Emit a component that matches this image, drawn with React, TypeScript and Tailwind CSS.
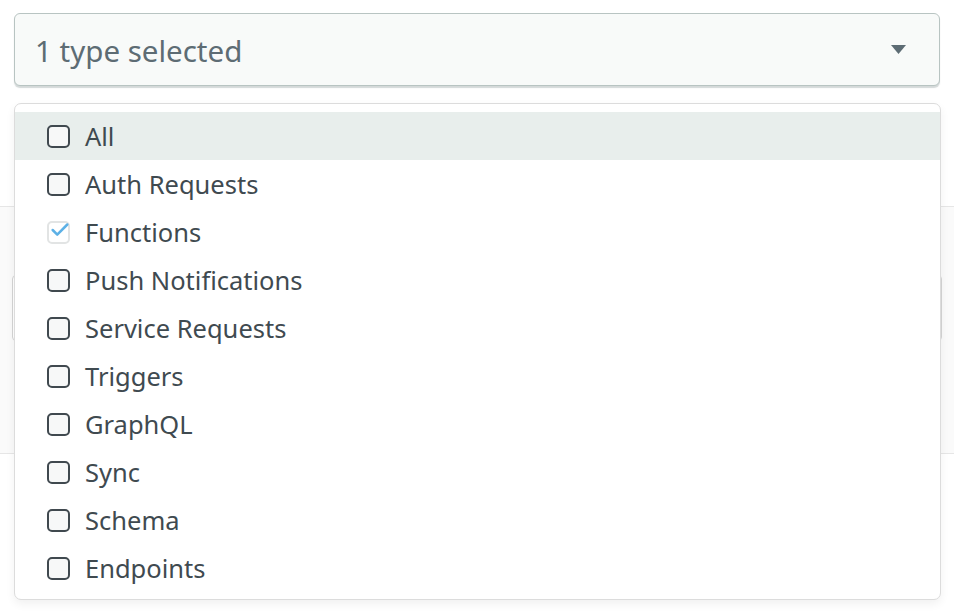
import { Check } from "lucide-react";

const TYPES = [
  "All",
  "Auth Requests",
  "Functions",
  "Push Notifications",
  "Service Requests",
  "Triggers",
  "GraphQL",
  "Sync",
  "Schema",
  "Endpoints",
];

const SELECTED = ["Functions"];

export default function App() {
  return (
    <div className="relative h-[614px] w-[954px] overflow-hidden bg-white font-['Noto_Sans',_'Open_Sans',_sans-serif]">
      {/* select */}
      <div className="px-[14px] pt-[13px]">
        <div className="flex h-[73px] items-center justify-between rounded-[6px] border border-[#b8c4c2] bg-[#f8faf9] pl-[20px] pr-[33px] shadow-[0_2px_1px_rgba(160,170,170,0.45)]">
          <span className="mt-[3px] text-[29.5px] leading-none text-[#5d6c74]">1 type selected</span>
          <svg width="15" height="10" viewBox="0 0 15 10">
            <path d="M0 0h15l-7.5 9z" fill="#5d6c74" />
          </svg>
        </div>
      </div>

      {/* content behind the menu */}
      <div className="mt-[120px] h-[248px] border-y border-[#e6e6e6] bg-[#fafafa] px-[12px] pt-[68px]">
        <div className="h-[66px] rounded-[4px] border border-[#d4d4d4] bg-white" />
      </div>

      {/* menu */}
      <div className="absolute left-[14px] top-[103px] w-[927px] rounded-[7px] border border-[#dcdcdc] bg-white pb-[7px] pt-[8px] shadow-[0_4px_10px_rgba(0,0,0,0.06)]">
        {TYPES.map((t, i) => {
          const checked = SELECTED.includes(t);
          return (
            <div key={t} className={`flex h-[48px] items-center gap-[15px] pl-[32px] ${i === 0 ? "bg-[#e8eeec]" : ""}`}>
              {checked ? (
                <span className="relative h-[23px] w-[23px] rounded-[5px] border-2 border-[#e2e4e4] bg-white">
                  <Check size={22} strokeWidth={2.75} className="absolute -top-[4px] left-[0px] text-[#5db1e6]" />
                </span>
              ) : (
                <span className="h-[23px] w-[23px] rounded-[5px] border-[2.5px] border-[#40494f] bg-[#f7f8f8]" />
              )}
              <span className="mt-[2px] text-[25.5px] leading-none text-[#3f4a50]">{t}</span>
            </div>
          );
        })}
      </div>
    </div>
  );
}
